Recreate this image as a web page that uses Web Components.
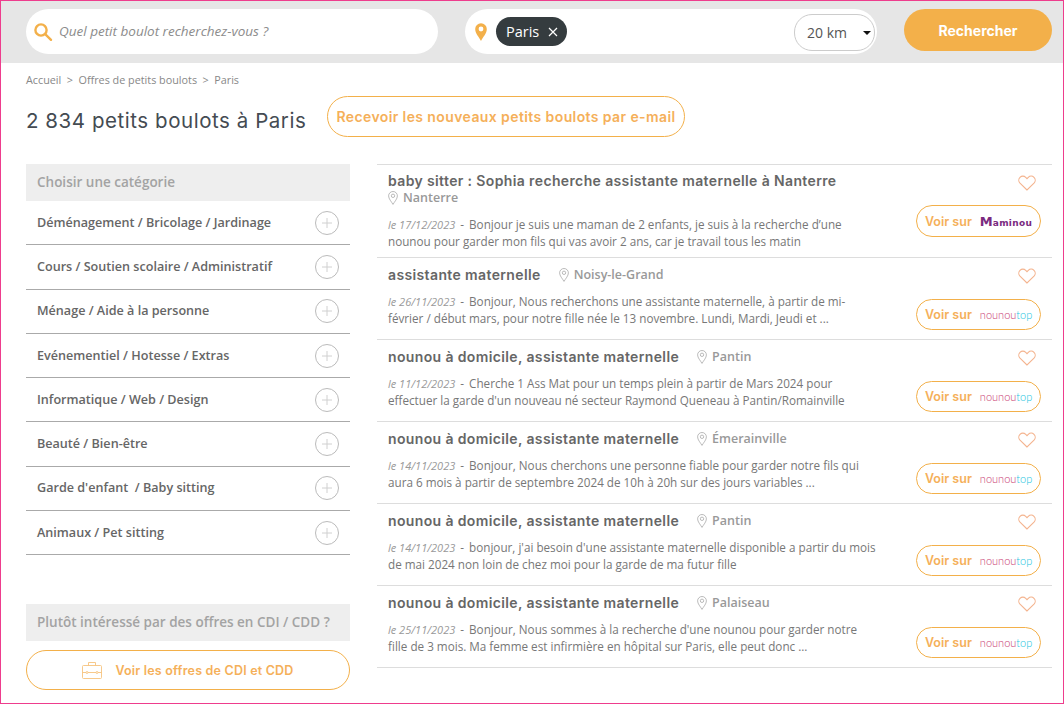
<!DOCTYPE html>
<html lang="fr">
<head>
<meta charset="utf-8">
<title>Petits boulots à Paris</title>
<style>
    html, body { margin: 0; padding: 0; background: #fff; }
    body { font-family: "Open Sans", sans-serif; color: #666; }
</style>
</head>
<body>
<job-page>
    <search-bar slot="top"></search-bar>
    <crumb-trail slot="top">
        <a>Accueil</a><a>Offres de petits boulots</a><a>Paris</a>
    </crumb-trail>
    <page-title slot="top" count="2 834 petits boulots à Paris" action="Recevoir les nouveaux petits boulots par e-mail"></page-title>

    <side-box slot="left" heading="Choisir une catégorie">
        <category-row>Déménagement / Bricolage / Jardinage</category-row>
        <category-row>Cours / Soutien scolaire / Administratif</category-row>
        <category-row>Ménage / Aide à la personne</category-row>
        <category-row>Evénementiel / Hotesse / Extras</category-row>
        <category-row>Informatique / Web / Design</category-row>
        <category-row>Beauté / Bien-être</category-row>
        <category-row>Garde d'enfant &nbsp;/ Baby sitting</category-row>
        <category-row>Animaux / Pet sitting</category-row>
    </side-box>
    <cdi-box slot="left"></cdi-box>

    <job-item slot="right" logo="maminou" wrap title="baby sitter : Sophia recherche assistante maternelle à Nanterre" city="Nanterre" date="le 17/12/2023" first="Bonjour je suis une maman de 2 enfants, je suis à la recherche d’une">nounou pour garder mon fils qui vas avoir 2 ans, car je travail tous les matin</job-item>
    <job-item slot="right" title="assistante maternelle" city="Noisy-le-Grand" date="le 26/11/2023" first="Bonjour, Nous recherchons une assistante maternelle, à partir de mi-">février / début mars, pour notre fille née le 13 novembre. Lundi, Mardi, Jeudi et ...</job-item>
    <job-item slot="right" title="nounou à domicile, assistante maternelle" city="Pantin" date="le 11/12/2023" first="Cherche 1 Ass Mat pour un temps plein à partir de Mars 2024 pour">effectuer la garde d'un nouveau né secteur Raymond Queneau à Pantin/Romainville</job-item>
    <job-item slot="right" title="nounou à domicile, assistante maternelle" city="Émerainville" date="le 14/11/2023" first="Bonjour, Nous cherchons une personne fiable pour garder notre fils qui">aura 6 mois à partir de septembre 2024 de 10h à 20h sur des jours variables ...</job-item>
    <job-item slot="right" title="nounou à domicile, assistante maternelle" city="Pantin" date="le 14/11/2023" first="bonjour, j'ai besoin d'une assistante maternelle disponible a partir du mois">de mai 2024 non loin de chez moi pour la garde de ma futur fille</job-item>
    <job-item slot="right" title="nounou à domicile, assistante maternelle" city="Palaiseau" date="le 25/11/2023" first="Bonjour, Nous sommes à la recherche d'une nounou pour garder notre">fille de 3 mois. Ma femme est infirmière en hôpital sur Paris, elle peut donc ...</job-item>
</job-page>

<script>
const titleFont = '"Inter", "Liberation Sans", sans-serif';
const orange = '#f3b04a';
const orangeText = '#f5b05a';

const pinIcon = `<svg width="10" height="14" viewBox="0 0 10 14" fill="none" stroke="#aaa" stroke-width=".8"><path d="M5 13.400C3.400 10.600 .6 7.800 .6 4.900a4.400 4.400 0 0 1 8.800 0c0 2.900-2.800 5.700-4.400 8.500z"/><circle cx="5" cy="4.800" r="1.700"/></svg>`;

function define(name, html) {
    customElements.define(name, class extends HTMLElement {
        connectedCallback() {
            if (this.shadowRoot) return;
            this.attachShadow({mode: 'open'});
            this.shadowRoot.innerHTML = typeof html === 'function' ? html(this) : html;
        }
    });
}

define('job-page', `
<style>
    :host { display: block; width: 1064px; height: 704px; box-sizing: border-box; border: 1px solid #ee3d8d; overflow: hidden; }
    #cols { display: flex; padding: 27px 11px 0 25px; gap: 27px; }
    #left { width: 324px; flex: none; }
    #right { flex: 1; border-top: 1px solid #ddd; }
</style>
<slot name="top"></slot>
<div id="cols">
    <div id="left"><slot name="left"></slot></div>
    <div id="right"><slot name="right"></slot></div>
</div>`);

define('search-bar', `
<style>
    :host { display: flex; height: 62px; box-sizing: border-box; background: #e6e6e6; padding: 8px 10px 0 25px; font-family: "Open Sans", sans-serif; }
    .pill { background: #fff; border-radius: 23px; height: 45px; width: 412px; flex: none; display: flex; align-items: center; box-sizing: border-box; }
    #what { padding-left: 7px; gap: 6px; margin-right: 27px; font-size: 13.500px; font-style: italic; color: #8c8c8c; }
    #what span { margin-top: -2px; }
    #where { padding: 0 2px 0 10px; }
    #chip { margin-left: 9px; display: flex; align-items: center; gap: 9px; height: 29px; padding: 0 9px 0 10px; border-radius: 15px; background: #353c3f; color: #fff; font-size: 14.500px; }
    #dist { margin-left: auto; width: 81px; height: 37px; margin-top: 2px; box-sizing: border-box; border: 1px solid #ccc; border-radius: 18px; display: flex; align-items: center; justify-content: space-between; padding: 0 3px 0 12px; font-size: 14px; color: #555; }
    #caret { width: 0; height: 0; border: 4px solid transparent; border-top: 4px solid #111; border-bottom: 0; }
    #go { margin-left: 27px; width: 148px; height: 42px; border-radius: 21px; background: ${orange}; color: #fff; display: flex; align-items: center; justify-content: center; font: 700 14px ${titleFont}; }
</style>
<div class="pill" id="what">
    <svg width="20" height="20" viewBox="0 0 20 20" fill="none" stroke="${orange}" stroke-width="2.400"><circle cx="8" cy="8" r="5.600"/><path d="M12.200 12.200l5.800 5.600" stroke-linecap="round"/></svg>
    <span>Quel petit boulot recherchez-vous ?</span>
</div>
<div class="pill" id="where">
    <svg width="12" height="18" viewBox="0 0 12 18"><path fill="${orange}" fill-rule="evenodd" d="M6 18C4 13.800 .2 10.600 .2 6a5.800 5.800 0 0 1 11.600 0c0 4.600-3.800 7.800-5.800 12zM6 3.600a2.400 2.400 0 1 0 0 4.800 2.400 2.400 0 0 0 0-4.800z"/></svg>
    <div id="chip"><span>Paris</span><svg width="10" height="10" viewBox="0 0 10 10" stroke="#fff" stroke-width="1.200"><path d="M1 1l8 8M9 1l-8 8"/></svg></div>
    <div id="dist"><span>20 km</span><i id="caret"></i></div>
</div>
<div id="go">Rechercher</div>`);

define('crumb-trail', `
<style>
    :host { display: flex; gap: 5.500px; padding: 10px 25px 0; font: 10.800px/14px "Open Sans", sans-serif; color: #888; }
    ::slotted(a) { color: #888; display: inline-flex; gap: 5.500px; }
    ::slotted(a:not(:last-child))::after { content: ">"; }
</style>
<slot></slot>`);

define('page-title', host => `
<style>
    :host { display: flex; align-items: center; padding: 9px 0 0 25px; }
    h1 { margin: 8px 0 0; width: 301px; flex: none; font: 400 20.500px ${titleFont}; letter-spacing: .55px; color: #444b52; }
    a { height: 41px; box-sizing: border-box; width: 358px; border: 1px solid ${orange}; border-radius: 21px; display: flex; align-items: center; justify-content: center; color: ${orangeText}; font: 600 14px ${titleFont}; letter-spacing: .4px; }
</style>
<h1>${host.getAttribute('count')}</h1>
<a>${host.getAttribute('action')}</a>`);

define('side-box', host => `
<style>
    :host { display: block; }
    h2 { margin: 0; height: 37px; padding-left: 11px; background: #eee; color: #a3a3a3; font: 600 13.500px/36px "Open Sans", sans-serif; }
</style>
<h2>${host.getAttribute('heading')}</h2>
<slot></slot>`);

define('category-row', `
<style>
    :host { display: flex; align-items: center; justify-content: space-between; height: 43.300px; border-bottom: 1px solid #aaa; padding: 0 11px; font: 600 12.600px "Open Sans", sans-serif; color: #666; }
    slot { display: block; margin-top: -1px; }
    i { width: 22px; height: 22px; border: 1px solid #bbb; border-radius: 50%; flex: none; }
    svg { display: block; margin: 5px; }
</style>
<slot></slot>
<i><svg width="12" height="12" viewBox="0 0 12 12" stroke="#d0d0d0"><path d="M6 1v10M1 6h10"/></svg></i>`);

define('cdi-box', `
<style>
    :host { display: block; margin-top: 49px; }
    h2 { margin: 0; height: 37px; padding-left: 11px; background: #eee; color: #a3a3a3; font: 600 13.500px/36px "Open Sans", sans-serif; }
    a { margin-top: 9px; height: 40px; box-sizing: border-box; border: 1px solid ${orange}; border-radius: 20px; display: flex; align-items: center; justify-content: center; gap: 13px; color: ${orangeText}; font: 600 12.500px ${titleFont}; letter-spacing: .2px; }
</style>
<h2>Plutôt intéressé par des offres en CDI / CDD ?</h2>
<a>
    <svg width="20" height="17" viewBox="0 0 20 17" fill="none" stroke="#f6c37e" stroke-width=".9"><rect x=".5" y="3.500" width="19" height="13" rx="1"/><path d="M6.500 3.500v-3h7v3M.5 10.500h19"/><circle cx="5" cy="10.500" r="1" fill="#fff"/><circle cx="15" cy="10.500" r="1" fill="#fff"/></svg>
    <span>Voir les offres de CDI et CDD</span>
</a>`);

define('job-item', host => {
    const logo = host.getAttribute('logo') === 'maminou'
        ? `<b id="mam"><span>M</span>aminou</b>`
        : `<b id="top">nounou<em>top</em></b>`;
    return `
<style>
    :host { display: flex; box-sizing: border-box; height: 82px; border-bottom: 1px solid #ddd; padding-left: 11px; font-family: "Open Sans", sans-serif; }
    :host([wrap]) { height: 93px; }
    #main { width: 500px; flex: none; }
    #head { display: flex; flex-wrap: wrap; column-gap: 18px; align-items: center; padding-top: 7px; }
    :host([wrap]) #head { padding-top: 6px; }
    h3 { margin: 0; font: 600 14px/19px ${titleFont}; letter-spacing: .37px; color: #666; }
    #city { display: flex; align-items: center; gap: 5px; font: 600 12.500px/16px "Open Sans", sans-serif; color: #999; }
    #text { margin-top: 9px; font-size: 11.700px; line-height: 17px; color: #777; }
    :host([wrap]) #text { margin-top: 10px; }
    #first { display: flex; gap: 5px; white-space: nowrap; }
    time { font-style: italic; font-size: 11px; color: #999; }
    #aside { margin-left: auto; width: 125px; margin-right: 11px; display: flex; flex-direction: column; align-items: flex-end; padding-top: 10px; box-sizing: border-box; }
    #heart { margin-right: 5px; flex: none; }
    #see { margin-top: 15px; width: 125px; height: 31px; box-sizing: border-box; flex: none; border: 1px solid ${orange}; border-radius: 16px; display: flex; align-items: center; padding-left: 8px; gap: 8px; color: ${orangeText}; font: 600 12.500px ${titleFont}; }
    :host([wrap]) #see { margin-top: 14px; height: 32px; }
    #mam { width: 50px; color: #7a2a80; font: 700 9px "DejaVu Sans", sans-serif; white-space: nowrap; letter-spacing: .3px; }
    #mam span { font-size: 13px; letter-spacing: 0; }
    #top { width: 50px; font: 300 11px Lato, sans-serif; color: #c93a72; white-space: nowrap; }
    em { font-style: normal; color: #22c4e0; }
</style>
<div id="main">
    <div id="head"><h3>${host.getAttribute('title')}</h3><span id="city">${pinIcon}${host.getAttribute('city')}</span></div>
    <div id="text">
        <div id="first"><time>${host.getAttribute('date')}</time><span>-</span><span>${host.getAttribute('first')}</span></div>
        <slot></slot>
    </div>
</div>
<div id="aside">
    <svg id="heart" width="18" height="16" viewBox="0 0 18 16" fill="none" stroke="#f4b48f" stroke-width="1.100"><path d="M9 15L2 8.200C.4 6.500.4 3.900 2 2.300s4.100-1.600 5.700 0L9 3.600l1.300-1.300c1.600-1.600 4.100-1.600 5.700 0s1.600 4.200 0 5.900z"/></svg>
    <a id="see"><span>Voir sur</span>${logo}</a>
</div>`;
});
</script>
</body>
</html>
